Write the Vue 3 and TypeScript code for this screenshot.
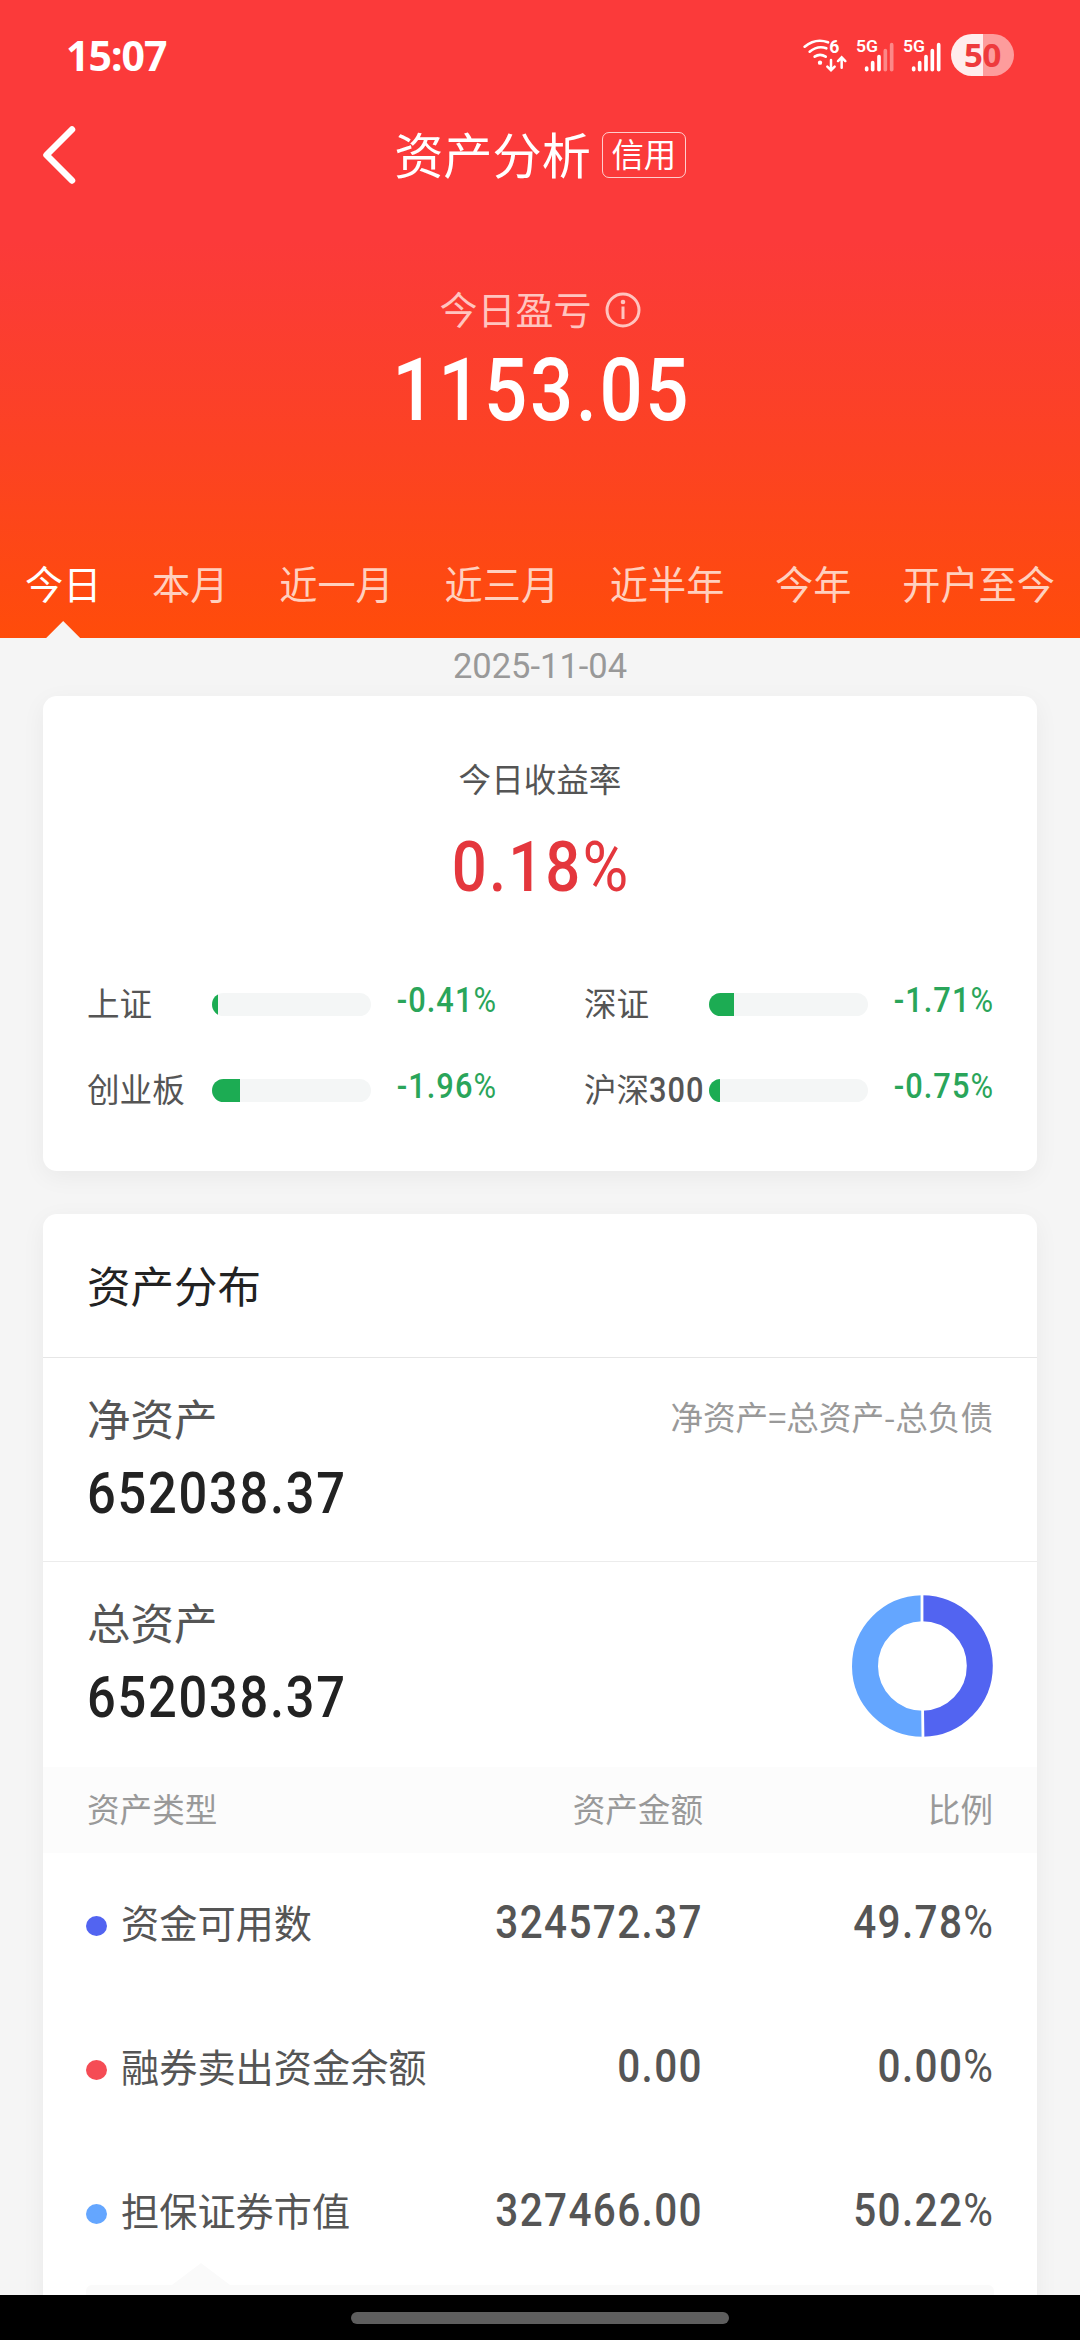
<script setup lang="ts">
interface IndexItem {
  name: string
  digits?: string
  change: string
  fill: number
}

interface AssetRow {
  name: string
  amount: string
  ratio: string
  color: string
}

const tabs: string[] = ['今日', '本月', '近一月', '近三月', '近半年', '今年', '开户至今']
const activeTab = '今日'

const indexes: IndexItem[] = [
  { name: '上证', change: '-0.41', fill: 6 },
  { name: '深证', change: '-1.71', fill: 25 },
  { name: '创业板', change: '-1.96', fill: 28 },
  { name: '沪深', digits: '300', change: '-0.75', fill: 11 },
]

const assets: AssetRow[] = [
  { name: '资金可用数', amount: '324572.37', ratio: '49.78', color: '#5264f1' },
  { name: '融券卖出资金余额', amount: '0.00', ratio: '0.00', color: '#f54c55' },
  { name: '担保证券市值', amount: '327466.00', ratio: '50.22', color: '#64a6ff' },
]

// Bars of the two SIM signal meters; the first has two unlit bars.
const signals: number[] = [3, 5]
const signalBars = [
  { x: 31, top: 88 },
  { x: 49, top: 72 },
  { x: 68, top: 54 },
  { x: 87, top: 36 },
  { x: 106, top: 18 },
]

// End point of an arc that starts at twelve o'clock.
const radius = 57.8
const angle = (49.78 / 100) * Math.PI * 2
const endX = 71 + Math.sin(angle) * radius
const endY = 71 - Math.cos(angle) * radius
const firstArc = `M71 ${71 - radius} A${radius} ${radius} 0 0 1 ${endX} ${endY}`
const secondArc = `M${endX} ${endY} A${radius} ${radius} 0 0 1 71 ${71 - radius}`
const gapX = 71 + Math.sin(angle) * 72
const gapY = 71 - Math.cos(angle) * 72
</script>

<template>
  <div class="page">
    <header class="head">
      <div class="status">
        <span class="clock">15:07</span>
        <div class="status-icons">
          <svg class="wifi" viewBox="66 50 138 110" fill="none" stroke="#fff" stroke-linecap="round">
            <path d="M74 79 Q107 52 144 66" stroke-width="8" />
            <path d="M89 94 Q114 74 139 84" stroke-width="8" />
            <path d="M104 109 Q120 98 137 109" stroke-width="8" />
            <circle cx="120" cy="127" r="6.5" fill="#fff" stroke="none" />
            <text x="148" y="98" class="svg-text" font-size="53" font-weight="700">6</text>
            <path d="M153 119 V149 M142 139 L153 150 L164 139" stroke-width="7.5" />
            <path d="M185 142 V112 M174 122 L185 111 L196 122" stroke-width="7.5" />
          </svg>
          <svg v-for="lit in signals" :key="lit" class="signal" viewBox="0 0 120 110">
            <text x="3" y="45" class="svg-text" font-size="49" font-weight="600" textLength="66" lengthAdjust="spacingAndGlyphs">5G</text>
            <line
              v-for="(bar, i) in signalBars"
              :key="bar.x"
              :x1="bar.x + 4"
              :x2="bar.x + 4"
              :y1="bar.top + 5"
              y2="98"
              stroke="#fff"
              stroke-width="11"
              stroke-linecap="round"
              :stroke-opacity="i < lit ? 1 : 0.4"
            />
          </svg>
          <div class="battery">50</div>
        </div>
      </div>

      <nav class="nav">
        <svg class="back" viewBox="0 0 40 64" fill="none" stroke="#fff" stroke-width="6.5" stroke-linecap="round" stroke-linejoin="round">
          <path d="M33 6.5 L7.5 32 L33 57.5" />
        </svg>
        <div class="title">
          <h1>资产分析</h1>
          <span class="tag">信用</span>
        </div>
      </nav>

      <section class="hero">
        <div class="hero-label">
          <span>今日盈亏</span>
          <svg class="info" viewBox="0 0 36 36" fill="none" stroke="#ffc4bf">
            <circle cx="18" cy="18" r="16" stroke-width="3" />
            <path d="M18 14.5 V27" stroke-width="3" />
            <circle cx="18" cy="10" r="2.3" fill="#ffc4bf" stroke="none" />
          </svg>
        </div>
        <div class="num hero-value">1153.05</div>
      </section>

      <div class="tabs">
        <span v-for="tab in tabs" :key="tab" class="tab" :class="{ active: tab === activeTab }">{{ tab }}</span>
      </div>
    </header>

    <main class="body">
      <div class="date">2025-11-04</div>

      <section class="card yield">
        <div class="yield-label">今日收益率</div>
        <div class="num yield-value">0.18<i>%</i></div>
        <div class="indexes">
          <div v-for="item in indexes" :key="item.name" class="index">
            <span class="index-name">{{ item.name }}<span v-if="item.digits" class="num index-digits">{{ item.digits }}</span></span>
            <div class="bar"><div class="fill" :style="{ width: item.fill + 'px' }"></div></div>
            <span class="num index-change">{{ item.change }}<i>%</i></span>
          </div>
        </div>
      </section>

      <section class="card">
        <h2 class="card-title">资产分布</h2>
        <div class="block net">
          <div>
            <div class="block-label">净资产</div>
            <div class="num block-value">652038.37</div>
          </div>
          <span class="formula">净资产=总资产-总负债</span>
        </div>
        <div class="block">
          <div>
            <div class="block-label">总资产</div>
            <div class="num block-value">652038.37</div>
          </div>
          <svg class="donut" viewBox="0 0 142 142" fill="none">
            <path :d="firstArc" stroke="#5264f1" stroke-width="26" />
            <path :d="secondArc" stroke="#64a6ff" stroke-width="26" />
            <path :d="`M71 71 V-1 M71 71 L${gapX} ${gapY}`" stroke="#fff" stroke-width="2.8" />
          </svg>
        </div>

        <div class="row row-head">
          <span>资产类型</span>
          <span class="right">资产金额</span>
          <span class="right">比例</span>
        </div>
        <div v-for="row in assets" :key="row.name" class="row">
          <div class="name">
            <span class="dot" :style="{ background: row.color }"></span>
            <span class="name-text">{{ row.name }}</span>
          </div>
          <span class="num right value">{{ row.amount }}</span>
          <span class="num right value">{{ row.ratio }}<i>%</i></span>
        </div>
        <div class="detail"></div>
      </section>
    </main>

    <footer class="gesture"><div class="handle"></div></footer>
  </div>
</template>

<style>
body {
  margin: 0;
  overflow: hidden;
}
</style>

<style scoped>
.page {
  width: 1080px;
  height: 2340px;
  display: flex;
  flex-direction: column;
  overflow: hidden;
  background: #f5f5f5;
  font-family: "Noto Sans CJK SC", sans-serif;
  color: #555;
}

h1,
h2 {
  margin: 0;
  font-weight: 400;
}

i {
  font-style: normal;
  font-weight: 400;
  letter-spacing: 0;
}

.num {
  font-family: Roboto, sans-serif;
  font-weight: 500;
  letter-spacing: 0.034em;
  transform: scaleX(0.88);
  white-space: nowrap;
}

.head {
  flex: none;
  height: 638px;
  background: linear-gradient(180deg, #fb3a3a 0, #fb3a3a 240px, #fc4223 450px, #ff4c0a 638px);
  color: #fff;
}

.status {
  height: 110px;
  box-sizing: border-box;
  padding: 0 66px 0 66px;
  display: flex;
  align-items: center;
  justify-content: space-between;
}

.clock {
  font: 700 41px/60px "Noto Sans", sans-serif;
  letter-spacing: -1px;
}

.status-icons {
  display: flex;
  align-items: center;
}

.svg-text {
  font-family: Roboto, sans-serif;
  fill: #fff;
  stroke: none;
}

.wifi {
  width: 46px;
  height: 36.7px;
  margin-right: 7px;
}

.signal {
  width: 40px;
  height: 36.7px;
  margin-right: 7px;
}

.battery {
  width: 63px;
  height: 42px;
  margin-left: 2px;
  border-radius: 21px;
  background: linear-gradient(90deg, #ffeded 50%, #fd9c9c 50%);
  color: #ee3a3c;
  text-align: center;
  font: 700 33px/42px "Noto Sans", sans-serif;
  letter-spacing: -0.5px;
}

.nav {
  height: 90px;
  display: grid;
  grid-template-columns: 120px 1fr 120px;
  align-items: center;
}

.back {
  width: 40px;
  height: 64px;
  margin-left: 39px;
}

.title {
  display: flex;
  align-items: center;
  justify-content: center;
  gap: 11px;
}

.title h1 {
  font-size: 49.2px;
  line-height: 60px;
  padding-bottom: 4px;
}

.tag {
  box-sizing: border-box;
  width: 84px;
  height: 46px;
  border: 1.5px solid rgba(255, 255, 255, 0.75);
  border-radius: 7px;
  text-align: center;
  font-size: 32.4px;
  line-height: 40px;
}

.hero {
  height: 328px;
  box-sizing: border-box;
  padding-top: 80px;
  text-align: center;
}

.hero-label {
  display: flex;
  align-items: center;
  justify-content: center;
  gap: 13px;
  font-size: 38px;
  line-height: 56px;
  color: #ffc4bf;
}

.info {
  width: 36px;
  height: 36px;
  margin-top: 4px;
}

.hero-value {
  padding-left: 4px;
  font-size: 86.5px;
  line-height: 109px;
}

.tabs {
  height: 110px;
  box-sizing: border-box;
  padding: 0 25px;
  display: flex;
  justify-content: space-between;
  font-size: 38.2px;
  line-height: 110px;
  color: #ffd0bf;
}

.tab {
  position: relative;
}

.tab.active {
  color: #fff;
}

.tab.active::after {
  content: "";
  position: absolute;
  left: 50%;
  bottom: 0;
  width: 34px;
  height: 17px;
  margin-left: -17px;
  background: #f5f5f5;
  clip-path: polygon(50% 0, 100% 100%, 0 100%);
}

.body {
  flex: 1;
  min-height: 0;
  overflow: hidden;
  padding: 0 43px;
}

.date {
  height: 58px;
  text-align: center;
  font: 400 34.5px/56px Roboto, sans-serif;
  color: #999;
}

.card {
  background: #fff;
  border-radius: 14px;
  box-shadow: 0 6px 24px rgba(0, 0, 0, 0.05);
}

.card + .card {
  margin-top: 43px;
}

.yield {
  height: 475px;
  box-sizing: border-box;
  padding: 58px 44px 0;
  text-align: center;
}

.yield-label {
  font-size: 32.6px;
  line-height: 48px;
}

.yield-value {
  margin-top: 25px;
  font-size: 70px;
  line-height: 80px;
  color: #e4373d;
}

.yield-value i {
  font-size: 71px;
}

.indexes {
  margin-top: 54px;
  display: grid;
  grid-template-columns: 409px 409px;
  grid-auto-rows: 86px;
  justify-content: space-between;
}

.index {
  display: grid;
  grid-template-columns: 125px 159px 1fr;
  align-items: center;
  text-align: left;
}

.index-name {
  font-size: 32.6px;
  line-height: 48px;
  padding-bottom: 4px;
  white-space: nowrap;
}

.index-digits {
  display: inline-block;
  font-size: 35px;
  line-height: 40px;
  transform-origin: left;
}

.bar {
  height: 23px;
  border-radius: 12px;
  overflow: hidden;
  background: #f4f6f6;
}

.fill {
  height: 100%;
  background: #1cac53;
}

.index-change {
  padding-bottom: 7px;
  font-size: 35px;
  line-height: 44px;
  color: #2aa55a;
  text-align: right;
  transform-origin: right;
}

.card-title {
  height: 144px;
  box-sizing: border-box;
  padding: 0 44px;
  border-bottom: 1px solid #e6e6e6;
  font-size: 43.5px;
  line-height: 141px;
  color: #222;
}

.block {
  height: 205px;
  box-sizing: border-box;
  padding: 32px 44px 0;
  display: flex;
  align-items: flex-start;
  justify-content: space-between;
}

.net {
  height: 204px;
  border-bottom: 1px solid #ececec;
}

.block-label {
  font-size: 43.5px;
  line-height: 56px;
}

.block-value {
  margin-top: 13px;
  font-size: 57.5px;
  line-height: 70px;
  color: #222;
  transform-origin: left;
}

.formula {
  font-size: 32.6px;
  line-height: 51px;
  color: #999;
}

.donut {
  width: 142px;
  height: 142px;
  margin-top: 1px;
}

.row {
  height: 144px;
  box-sizing: border-box;
  padding: 0 44px 0 43px;
  display: grid;
  grid-template-columns: 350px 267px 290px;
  align-items: center;
}

.row-head {
  height: 86px;
  padding: 0 44px 6px;
  grid-template-columns: 349px 267px 290px;
  background: #fcfcfc;
  font-size: 32.6px;
  color: #999;
}

.right {
  text-align: right;
  transform-origin: right;
}

.name {
  display: flex;
  align-items: center;
  white-space: nowrap;
  font-size: 38.2px;
  line-height: 56px;
}

.name-text {
  padding-bottom: 6px;
}

.dot {
  width: 21px;
  height: 20px;
  margin: 2px 14px 0 0;
  border-radius: 50%;
}

.value {
  padding-bottom: 7px;
  font-size: 46px;
  line-height: 56px;
}

.detail {
  position: relative;
  height: 60px;
  margin: 0 43px;
  border-radius: 6px;
  background: #fafafa;
}

.detail::before {
  content: "";
  position: absolute;
  left: 86px;
  top: -22px;
  width: 58px;
  height: 22px;
  background: #fafafa;
  clip-path: polygon(50% 0, 100% 100%, 0 100%);
}

.gesture {
  flex: none;
  height: 45px;
  background: #000;
  display: flex;
  align-items: center;
  justify-content: center;
}

.handle {
  width: 378px;
  height: 12px;
  border-radius: 6px;
  background: #5e5e5e;
}
</style>
